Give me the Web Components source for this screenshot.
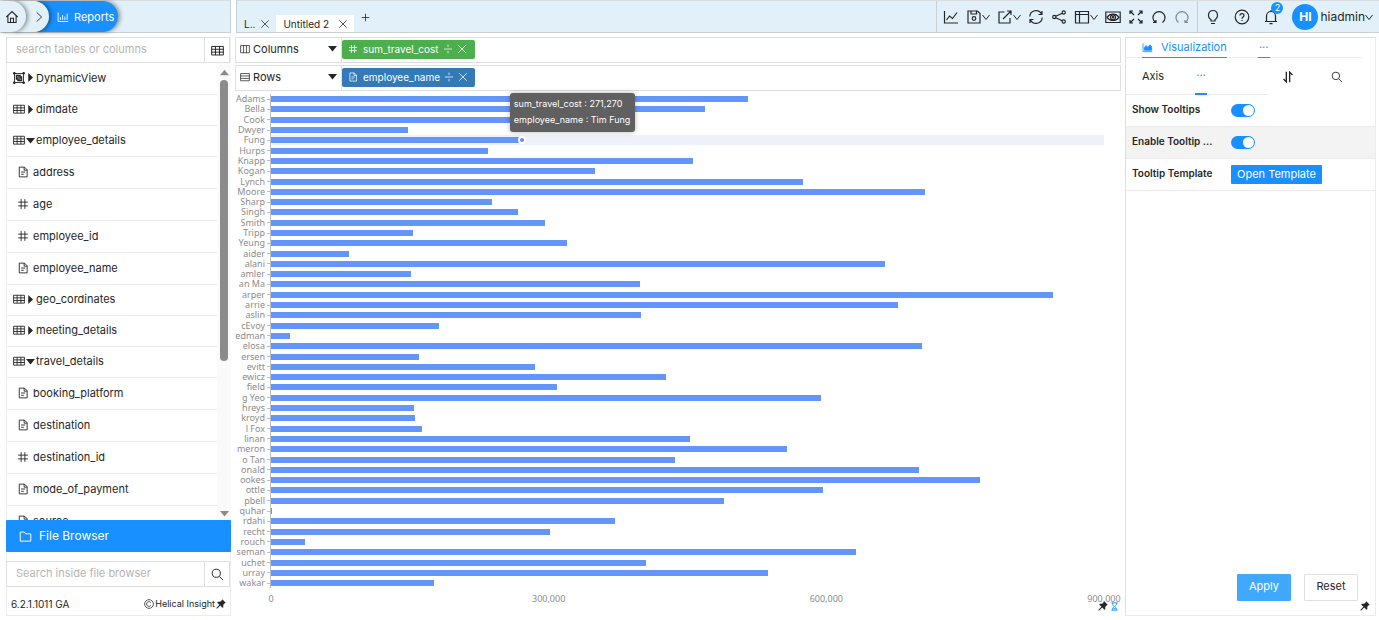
<!DOCTYPE html>
<html lang="en">
<head>
<meta charset="utf-8">
<meta name="viewport" content="width=device-width, initial-scale=1">
<title>Reports</title>
<style>
    html, body{
        height: 100%;
        margin: 0;
    }
    body{
        --blue: #1890ff;
        --bar: #e1f0f9;
        --line: #dfdfdf;
        --soft: #ececec;
        font-family: Inter, "Liberation Sans", sans-serif;
        font-size: 11px;
        line-height: 16px;
        color: #262626;
        background: #fff;
        overflow: hidden;
    }
</style>
</head>
<body>
<hi-app></hi-app>
<script>
const ICONS = {
    home: '<path d="M1.500 8 8 1.800 14.500 8M3.300 6.800v7.400h9.400V6.800M6.300 14V9.500h3.400V14"/>',
    next: '<path d="m5 2 6.500 6L5 14"/>',
    barline: '<path d="M1.500 2v12h13.500M4.500 12V8M7.500 12V5.500M10.500 12V7.500M13.500 12V3.500"/>',
    area: '<path d="M1.500 2v12h13.500"/><path fill="currentColor" d="M3.500 12V8l2.500-3 2.500 3 3-4 2.500 3v5z"/>',
    close: '<path d="m2 2 12 12M14 2 2 14"/>',
    plus: '<path d="M8 2.500v11M2.500 8h11"/>',
    line: '<path d="M1.500 2v12h13.500M3.500 11l3-4 3 2.500 4.500-6"/>',
    save: '<path d="M2 2h9.500L14 4.500V14H2zM5 2v3h5.500V2"/><circle cx="8" cy="9.500" r="1.800"/>',
    share: '<path d="M7.500 3H2v11h11V9M6 10l7.500-7.500M10 2h4v4"/>',
    sync: '<path d="M1.800 7.500a6.200 6.200 0 0 1 11.700-2.500M14.200 8.500a6.200 6.200 0 0 1-11.700 2.500M14 2v3.500h-3.500M2 14v-3.500h3.500"/>',
    nodes: '<path d="M11.300 4.200 4.700 7.300M4.700 8.700l6.600 3.100"/><circle cx="3.300" cy="8" r="1.600"/><circle cx="12.700" cy="3.500" r="1.600"/><circle cx="12.700" cy="12.500" r="1.600"/>',
    layout: '<path d="M1.500 2.500h13v11.500h-13zM5.500 2.500V14M1.500 5.500h13"/>',
    eye: '<path d="M.8 3h14.400v10.500H.8z"/><path d="M2 8.300C5 4 11 4 14 8.300 11 12.500 5 12.500 2 8.300z"/><circle cx="8" cy="8.300" r="2.500"/><circle cx="8" cy="8.300" r=".7"/>',
    expand: '<path d="m6 6-4-4M10 6l4-4M6 10l-4 4M10 10l4 4M2 5V2h3M11 2h3v3M2 11v3h3M14 11v3h-3"/>',
    undo: '<path d="M4.500 13.500a6 6 0 1 1 7 0M2 13.500h3V11"/>',
    redo: '<path d="M4.500 13.500a6 6 0 1 1 7 0M14 13.500h-3V11"/>',
    bulb: '<path d="M6 12v-1.500C2 8 3 1.500 8 1.500S14 8 10 10.500V12zM6 14.500h4"/>',
    help: '<circle cx="8" cy="8" r="6.800"/><path d="M6 6.500c0-2.700 4-2.500 4 0C10 8 8 8 8 9.700M8 11v1"/>',
    bell: '<path d="M2 12.500h12M3.500 12.500V7a4.500 4.500 0 0 1 9 0v5.500M8 2.500V1M6.500 14.700h3"/>',
    down: '<path stroke-width="2" d="m1 4 7 9 7-9"/>',
    table: '<path d="M.8 3h14.400v10.500H.8zM.8 6.500h14.400M.8 10h14.400M5.500 3v10.500M10.500 3v10.500"/>',
    view: '<path d="M2 2h12v12H2z"/><path stroke-width="1.600" d="M4.500 4.500h5v5h-5zM6.500 6.500h5v5h-5z"/><path fill="currentColor" d="M.8.8h2v2h-2zM13.200.8h2v2h-2zM.8 13.200h2v2h-2zM13.200 13.200h2v2h-2z"/>',
    file: '<path d="M3 1.500h7l3.500 3.500v9.500H3zM9.500 1.500v4h4M5.500 8h5.500M5.500 11h3.500"/>',
    hash: '<path d="M5.500 1.500v13M10.500 1.500v13M1.500 5.500h13M1.500 10.500h13"/>',
    right: '<path fill="currentColor" stroke="none" d="M4 0 12.500 8 4 16z"/>',
    caret: '<path fill="currentColor" stroke="none" d="M0 3.500h16l-8 10z"/>',
    up: '<path fill="currentColor" stroke="none" d="M0 13h16L8 3z"/>',
    folder: '<path d="M1.500 2.500H6.500l1.700 2.200h6.300v9h-13z"/>',
    search: '<circle cx="6.500" cy="6.500" r="5"/><path d="m10.300 10.300 4.500 4.500"/>',
    copyright: '<circle cx="8" cy="8" r="7"/><path d="M11 5.800a3.800 3.800 0 1 0 0 4.400"/>',
    pin: '<path fill="currentColor" stroke="none" d="M10 .5 15.500 6l-2 1-2 2.500.3 3.500-1.500 1-3.500-3.500L1.500 15.500l-1-1L5.500 9.300 2 5.800l1-1.500 3.500.2L9 2.500z"/>',
    columns: '<path d="M1 2.500h14v11.500H1zM5.700 2.500V14M10.300 2.500V14"/>',
    rows: '<path d="M1 2.500h14v11.500H1zM1 6.300h14M1 10.200h14"/>',
    divide: '<path d="M1.500 8h13M8 1v4M8 11v4"/>',
    sort: '<path stroke-width="1.800" d="M5.800 1v13.500L2 10.800M10.200 15V1.500l3.800 3.700"/>',
    hourglass: '<path stroke-width="1.600" d="M2.500 1.500h11M2.500 14.500h11M4 1.500c0 4 3 5 3 6.500s-3 2.500-3 6.500M12 1.500c0 4-3 5-3 6.500s3 2.500 3 6.500M5.500 12h5"/>'
}

const BUTTON = `
    button{
        font: inherit;
        color: inherit;
        background: none;
        border: 0;
        padding: 0;
        margin: 0;
        cursor: pointer;
    }
`

class Base extends HTMLElement{
    render(css, html){
        if(!this.shadowRoot) this.attachShadow({mode: 'open'})
        this.shadowRoot.innerHTML = `<style>*{box-sizing: border-box} ${BUTTON} ${css}</style>${html}`
    }
}

class Icon extends Base{
    connectedCallback(){
        const size = this.getAttribute('size') || 16
        this.render(`
            :host{ display: inline-flex; flex: none; }
            svg{ display: block; }
        `, `<svg width="${size}" height="${size}" viewBox="0 0 16 16" fill="none" stroke="currentColor" stroke-width="1.200" aria-hidden="true">${ICONS[this.getAttribute('name')]}</svg>`)
    }
}

class Breadcrumb extends Base{
    connectedCallback(){
        this.render(`
            :host{ display: flex; align-items: center; height: 31px; }
            button{
                display: flex;
                align-items: center;
                justify-content: flex-end;
                height: 31px;
                border-radius: 0 16px 16px 0;
                background: var(--bar);
                box-shadow: 2px 0 4px rgba(0,0,0,.4);
                position: relative;
            }
            .home{ width: 26px; padding-right: 7px; z-index: 3; }
            .next{ width: 36px; margin-left: -13px; padding-right: 4px; z-index: 2; }
            .page{
                margin-left: -12px;
                padding: 0 4px 0 20px;
                gap: 5px;
                color: #fff;
                background: var(--blue);
                z-index: 1;
            }
        `, `
            <button class="home" aria-label="Home"><hi-icon name="home" size="14"></hi-icon></button>
            <button class="next" aria-label="Next"><hi-icon name="next" size="12"></hi-icon></button>
            <button class="page"><hi-icon name="barline" size="12"></hi-icon>Reports</button>
        `)
    }
}

class Topbar extends Base{
    connectedCallback(){
        this.render(`
            :host{ display: flex; gap: 5px; height: 33px; flex: none; }
            .left, .right{
                background: var(--bar);
                border-top: 1px solid #d9dcde;
                border-bottom: 1px solid #c9cfd2;
            }
            .left{ width: 231px; border-right: 1px solid #c9cfd2; }
            .right{ flex: 1; display: flex; border-left: 1px solid #c9cfd2; }
            .tabs{ flex: 1; display: flex; align-items: flex-end; }
            .tab{ display: flex; align-items: center; height: 17px; font-size: 10px; }
            .tab > *{ display: flex; align-items: center; }
            .small{ padding: 0 6px 0 7px; gap: 5px; }
            .active{ background: #fff; padding: 0 6px 0 7px; gap: 9px; }
            .add{ margin: 0 0 5px 6px; }
            .tools, .user{
                display: flex;
                align-items: center;
                border-left: 1px solid #c9cfd2;
            }
            .tools{ gap: 7px; padding: 0 7px 0 6px; }
            .user{ gap: 13px; padding: 0 6px 0 7px; }
            .tools button, .user button{ display: flex; align-items: center; }
            .dim{ opacity: .5; }
            .bell{ position: relative; }
            .badge{
                position: absolute;
                left: 8px;
                top: -7px;
                width: 12px;
                height: 12px;
                border-radius: 50%;
                background: var(--blue);
                color: #fff;
                font-size: 9px;
                line-height: 12px;
                text-align: center;
            }
            .avatar{
                width: 26px;
                height: 26px;
                margin-right: 2px;
                border-radius: 50%;
                background: var(--blue);
                color: #fff;
                font-weight: 700;
                line-height: 26px;
            }
            .name{ font-size: 12px; }
        `, `
            <div class="left"><hi-breadcrumb></hi-breadcrumb></div>
            <div class="right">
                <div class="tabs">
                    <div class="tab small"><button>L..</button><button aria-label="Close tab"><hi-icon name="close" size="10"></hi-icon></button></div>
                    <div class="tab active"><button>Untitled 2</button><button aria-label="Close tab"><hi-icon name="close" size="10"></hi-icon></button></div>
                    <button class="add" aria-label="Add tab"><hi-icon name="plus" size="11"></hi-icon></button>
                </div>
                <div class="tools">
                    <button aria-label="Chart"><hi-icon name="line"></hi-icon></button>
                    <button aria-label="Save"><hi-icon name="save"></hi-icon><hi-icon name="down" size="8"></hi-icon></button>
                    <button aria-label="Export"><hi-icon name="share"></hi-icon><hi-icon name="down" size="8"></hi-icon></button>
                    <button aria-label="Refresh"><hi-icon name="sync"></hi-icon></button>
                    <button aria-label="Share"><hi-icon name="nodes"></hi-icon></button>
                    <button aria-label="Layout"><hi-icon name="layout"></hi-icon><hi-icon name="down" size="8"></hi-icon></button>
                    <button aria-label="Preview"><hi-icon name="eye"></hi-icon></button>
                    <button aria-label="Full screen"><hi-icon name="expand"></hi-icon></button>
                    <button aria-label="Undo"><hi-icon name="undo"></hi-icon></button>
                    <button aria-label="Redo" class="dim"><hi-icon name="redo"></hi-icon></button>
                </div>
                <div class="user">
                    <button aria-label="Tips"><hi-icon name="bulb"></hi-icon></button>
                    <button aria-label="Help"><hi-icon name="help"></hi-icon></button>
                    <button aria-label="Notifications" class="bell"><hi-icon name="bell"></hi-icon><span class="badge">2</span></button>
                    <button class="name"><span class="avatar">HI</span>hiadmin<hi-icon name="down" size="8"></hi-icon></button>
                </div>
            </div>
        `)
    }
}

class SearchBox extends Base{
    connectedCallback(){
        const text = this.getAttribute('placeholder')
        this.render(`
            :host{ display: flex; height: 26px; flex: none; }
            input{
                flex: 1;
                min-width: 0;
                padding: 0 9px 3px;
                font: inherit;
                border: 1px solid var(--line);
                border-right: 0;
                outline: 0;
            }
            input::placeholder{ color: #b5b5b5; opacity: 1; }
            button{
                display: flex;
                align-items: center;
                justify-content: center;
                width: 26px;
                border: 1px solid var(--line);
            }
        `, `
            <input type="text" placeholder="${text}" aria-label="${text}">
            <button aria-label="${this.getAttribute('action')}"><hi-icon name="${this.getAttribute('icon')}" size="13"></hi-icon></button>
        `)
    }
}

// One line of the tree: a table with its arrow, or a column of a table
class Field extends Base{
    connectedCallback(){
        const kind = this.getAttribute('kind')
        const isTable = kind === 'table' || kind === 'view'
        const arrow = this.hasAttribute('open') ? 'caret' : 'right'
        this.render(`
            :host{ display: block; height: ${isTable ? 31 : 32}px; flex: none; border-bottom: 1px solid var(--soft); }
            :host([kind=view]){ height: 32px; }
            button{
                display: flex;
                align-items: center;
                width: 100%;
                height: 100%;
                padding: 0 0 2px ${isTable ? 7 : 11}px;
                gap: ${isTable ? 1 : 4}px;
            }
        `, `<button>
            <hi-icon name="${kind}" size="12"></hi-icon>
            ${isTable ? `<hi-icon name="${arrow}" size="9"></hi-icon>` : ''}
            <slot></slot>
        </button>`)
    }
}

class Sidebar extends Base{
    connectedCallback(){
        this.render(`
            :host{
                display: flex;
                flex-direction: column;
                width: 225px;
                flex: none;
                box-shadow: inset 0 0 0 1px var(--soft);
            }
            .tree{ display: flex; flex: 1; min-height: 0; }
            .fields{ flex: 1; display: flex; flex-direction: column; overflow: hidden; }
            .scroll{
                display: flex;
                flex-direction: column;
                align-items: center;
                gap: 3px;
                width: 14px;
                padding: 5px 0 2px;
                background: #fafafa;
                color: #8b8b8b;
            }
            .track{ flex: 1; width: 8px; }
            .thumb{ height: 66%; border-radius: 4px; background: #8b8b8b; }
            hi-search{ margin-right: 1px; }
            .browser{
                display: flex;
                align-items: center;
                gap: 7px;
                height: 32px;
                padding-left: 13px;
                margin-bottom: 9px;
                border-radius: 1px;
                background: var(--blue);
                color: #fff;
                font-size: 12px;
            }
            footer{
                display: flex;
                align-items: center;
                gap: 1px;
                height: 29px;
                padding: 4px 5px 0;
                font-size: 9px;
            }
            footer span{ flex: 1; font-size: 10px; }
        `, `
            <hi-search placeholder="search tables or columns" icon="table" action="Show tables"></hi-search>
            <div class="tree">
                <div class="fields">
                    <hi-field kind="view">DynamicView</hi-field>
                    <hi-field kind="table">dimdate</hi-field>
                    <hi-field kind="table" open>employee_details</hi-field>
                    <hi-field kind="file">address</hi-field>
                    <hi-field kind="hash">age</hi-field>
                    <hi-field kind="hash">employee_id</hi-field>
                    <hi-field kind="file">employee_name</hi-field>
                    <hi-field kind="table">geo_cordinates</hi-field>
                    <hi-field kind="table">meeting_details</hi-field>
                    <hi-field kind="table" open>travel_details</hi-field>
                    <hi-field kind="file">booking_platform</hi-field>
                    <hi-field kind="file">destination</hi-field>
                    <hi-field kind="hash">destination_id</hi-field>
                    <hi-field kind="file">mode_of_payment</hi-field>
                    <hi-field kind="file">source</hi-field>
                </div>
                <div class="scroll">
                    <hi-icon name="up" size="9"></hi-icon>
                    <div class="track"><div class="thumb"></div></div>
                    <hi-icon name="caret" size="9"></hi-icon>
                </div>
            </div>
            <button class="browser"><hi-icon name="folder" size="13"></hi-icon>File Browser</button>
            <hi-search placeholder="Search inside file browser" icon="search" action="Search"></hi-search>
            <footer>
                <span>6.2.1.1011 GA</span>
                <hi-icon name="copyright" size="10"></hi-icon>Helical Insight
                <hi-icon name="pin" size="10"></hi-icon>
            </footer>
        `)
    }
}

class Pill extends Base{
    connectedCallback(){
        this.render(`
            :host{
                display: flex;
                align-items: center;
                width: 133px;
                height: 19px;
                padding: 0 9px 0 6px;
                border-radius: 2px;
                background: #337ab7;
                color: #fff;
                font-size: 10px;
            }
            :host([measure]){ background: #4cae4c; }
            span{ flex: 1; padding-left: 5px; }
            button{ display: flex; margin-left: 4px; }
        `, `
            <hi-icon name="${this.hasAttribute('measure') ? 'hash' : 'file'}" size="10"></hi-icon>
            <span><slot></slot></span>
            <button aria-label="Options"><hi-icon name="divide" size="10"></hi-icon></button>
            <button aria-label="Remove"><hi-icon name="close" size="10"></hi-icon></button>
        `)
    }
}

class Shelf extends Base{
    connectedCallback(){
        this.render(`
            :host{ display: flex; height: 26px; border: 1px solid var(--line); }
            .label{
                display: flex;
                align-items: center;
                gap: 3px;
                width: 106px;
                padding: 0 4px 3px;
                border-right: 1px solid var(--line);
            }
            .label span{ flex: 1; text-align: left; }
            .drop{ display: flex; align-items: center; padding-bottom: 2px; }
        `, `
            <button class="label">
                <hi-icon name="${this.getAttribute('icon')}" size="10"></hi-icon>
                <span>${this.getAttribute('label')}</span>
                <hi-icon name="caret" size="9"></hi-icon>
            </button>
            <div class="drop"><slot></slot></div>
        `)
    }
}

const COSTS = [
    ['Adams', 515], ['Bella', 469], ['Cook', 330], ['Dwyer', 148], ['Fung', 271],
    ['Hurps', 234], ['Knapp', 456], ['Kogan', 350], ['Lynch', 575], ['Moore', 707],
    ['Sharp', 239], ['Singh', 267], ['Smith', 296], ['Tripp', 153], ['Yeung', 320],
    ['aider', 84], ['alani', 663], ['amler', 151], ['an Ma', 399], ['arper', 845],
    ['arrie', 677], ['aslin', 400], ['cEvoy', 181], ['edman', 21], ['elosa', 703],
    ['ersen', 160], ['evitt', 285], ['ewicz', 427], ['field', 309], ['g Yeo', 594],
    ['hreys', 155], ['kroyd', 156], ['l Fox', 163], ['linan', 453], ['meron', 558],
    ['o Tan', 436], ['onald', 700], ['ookes', 766], ['ottle', 596], ['pbell', 489],
    ['quhar', 1], ['rdahi', 372], ['recht', 301], ['rouch', 37], ['seman', 632],
    ['uchet', 405], ['urray', 537], ['wakar', 176]
]
const MAX = 900

class BarChart extends Base{
    connectedCallback(){
        const rows = COSTS.map(([name, cost]) => {
            const active = name === 'Fung'
            return `
                <div class="row${active ? ' active' : ''}">
                    <span class="name">${name}</span>
                    <i class="tick"></i>
                    <div class="lane">
                        <div class="bar" style="width: ${cost / MAX * 100}%">
                            ${active ? '<i class="dot"></i><div class="tip"><div>sum_travel_cost : 271,270</div><div>employee_name : Tim Fung</div></div>' : ''}
                        </div>
                    </div>
                </div>`
        }).join('')
        this.render(`
            :host{
                display: flex;
                flex-direction: column;
                flex: 1;
                min-height: 0;
                font-family: "Noto Sans", "Open Sans", sans-serif;
                font-size: 9px;
                color: #8c8c8c;
            }
            .plot{ flex: 1; display: flex; flex-direction: column; min-height: 0; padding-right: 17px; }
            .row{ flex: 1; display: flex; align-items: center; min-height: 0; }
            .name{ width: 30px; line-height: 10px; text-align: right; white-space: nowrap; }
            .tick{ width: 3px; height: 1px; margin: 0 0 0 2px; background: #bfbfbf; }
            .lane{
                flex: 1;
                display: flex;
                align-items: center;
                align-self: stretch;
                border-left: 1px solid #bfbfbf;
            }
            .bar{ height: 6px; background: #6395fa; position: relative; }
            .active .lane{ background: #eef1fa; }
            .dot{
                position: absolute;
                right: -4px;
                top: -1px;
                width: 8px;
                height: 8px;
                border: 2px solid #fff;
                border-radius: 50%;
                background: #5b8ff9;
            }
            .tip{
                position: absolute;
                left: 100%;
                bottom: 11px;
                margin-left: -12px;
                padding: 3px 5px 4px 4px;
                z-index: 1;
                border-radius: 3px;
                background: #606060;
                box-shadow: 0 0 5px rgba(0,0,0,.3);
                color: #fff;
                font-family: Inter, sans-serif;
                line-height: 16px;
                white-space: nowrap;
            }
            .axis{ display: flex; justify-content: space-between; padding: 3px 17px 0 36px; }
            .axis span{ display: flex; justify-content: center; width: 0; white-space: nowrap; }
        `, `
            <div class="plot">${rows}</div>
            <div class="axis"><span>0</span><span>300,000</span><span>600,000</span><span>900,000</span></div>
        `)
    }
}

class Workspace extends Base{
    connectedCallback(){
        this.render(`
            :host{ display: flex; flex-direction: column; flex: 1; min-width: 0; }
            .shelves{ display: flex; flex-direction: column; gap: 2px; margin-bottom: 3px; }
            footer{
                display: flex;
                justify-content: flex-end;
                align-items: center;
                gap: 2px;
                height: 10px;
                margin: -6px 2px 5px 0;
                z-index: 1;
            }
            .busy{ color: var(--blue); }
            footer button{ display: flex; }
        `, `
            <div class="shelves">
                <hi-shelf label="Columns" icon="columns"><hi-pill measure>sum_travel_cost</hi-pill></hi-shelf>
                <hi-shelf label="Rows" icon="rows"><hi-pill>employee_name</hi-pill></hi-shelf>
            </div>
            <hi-bar-chart></hi-bar-chart>
            <footer>
                <button aria-label="Pin"><hi-icon name="pin" size="10"></hi-icon></button>
                <button aria-label="History" class="busy"><hi-icon name="hourglass" size="9"></hi-icon></button>
            </footer>
        `)
    }
}

class Setting extends Base{
    connectedCallback(){
        const control = this.hasAttribute('action')
            ? `<button id="control">${this.getAttribute('action')}</button>`
            : '<input id="control" type="checkbox" role="switch" checked>'
        this.render(`
            :host{
                display: flex;
                align-items: center;
                height: 32px;
                padding: 0 6px;
                border-bottom: 1px solid var(--soft);
            }
            :host([shaded]){ background: #f3f3f3; }
            label{ width: 99px; padding-bottom: 4px; font-size: 10px; font-weight: 600; white-space: nowrap; }
            input{
                appearance: none;
                display: flex;
                width: 24px;
                height: 13px;
                margin: 0;
                padding: 1px;
                border-radius: 7px;
                background: #bfbfbf;
            }
            input::before{
                content: "";
                width: 11px;
                height: 11px;
                border-radius: 50%;
                background: #fff;
            }
            input:checked{ background: var(--blue); justify-content: flex-end; }
            button{
                height: 19px;
                padding: 0 6px 2px;
                border-radius: 1px;
                background: var(--blue);
                color: #fff;
            }
        `, `<label for="control">${this.getAttribute('label')}</label>${control}`)
    }
}

class Properties extends Base{
    connectedCallback(){
        this.render(`
            :host{
                display: flex;
                flex-direction: column;
                width: 251px;
                flex: none;
                border: 1px solid var(--line);
                border-right-color: var(--soft);
                border-bottom-color: var(--soft);
            }
            .tabs{ display: flex; height: 20px; margin-right: 13px; padding-left: 16px; border-bottom: 1px solid var(--soft); }
            .tabs button{
                display: flex;
                align-items: center;
                gap: 8px;
                height: 20px;
                padding-bottom: 1px;
                color: var(--blue);
                border-bottom: 1px solid var(--blue);
            }
            .tabs .more{ margin-left: 31px; }
            .sub{ display: flex; align-items: stretch; height: 37px; }
            .sub nav{ display: flex; width: 142px; padding-left: 16px; border-bottom: 1px solid var(--soft); }
            .sub nav button{ height: 37px; padding-bottom: 1px; }
            .sub .more{ margin-left: 31px; color: var(--blue); border-bottom: 2px solid var(--blue); }
            .more{ width: 12px; justify-content: center; }
            .tool{ display: flex; align-items: center; }
            .order{ margin-left: 14px; }
            .find{ margin-left: 37px; }
            .space{ flex: 1; }
            .actions{ display: flex; justify-content: flex-end; gap: 13px; padding-right: 17px; }
            .actions button{
                width: 54px;
                height: 27px;
                padding-bottom: 3px;
                border: 1px solid var(--line);
                border-radius: 1px;
            }
            .actions .apply{ background: #40a9ff; border-color: #40a9ff; color: #fff; }
            .pin{ display: flex; align-self: flex-end; margin: 0 5px 4px; }
        `, `
            <div class="tabs">
                <button><hi-icon name="area" size="11"></hi-icon>Visualization</button>
                <button class="more" aria-label="More tabs">···</button>
            </div>
            <div class="sub">
                <nav>
                    <button>Axis</button>
                    <button class="more" aria-label="More">···</button>
                </nav>
                <button class="tool order" aria-label="Sort"><hi-icon name="sort" size="12"></hi-icon></button>
                <button class="tool find" aria-label="Search"><hi-icon name="search" size="12"></hi-icon></button>
            </div>
            <hi-setting label="Show Tooltips"></hi-setting>
            <hi-setting label="Enable Tooltip ..." shaded></hi-setting>
            <hi-setting label="Tooltip Template" action="Open Template"></hi-setting>
            <div class="space"></div>
            <div class="actions">
                <button class="apply">Apply</button>
                <button>Reset</button>
            </div>
            <button class="pin" aria-label="Pin"><hi-icon name="pin" size="10"></hi-icon></button>
        `)
    }
}

class App extends Base{
    connectedCallback(){
        this.render(`
            :host{ display: flex; flex-direction: column; height: 100vh; }
            main{
                display: flex;
                flex: 1;
                gap: 4px;
                min-height: 0;
                padding: 4px 3px 4px 6px;
            }
        `, `
            <hi-topbar></hi-topbar>
            <main>
                <hi-sidebar></hi-sidebar>
                <hi-workspace></hi-workspace>
                <hi-properties></hi-properties>
            </main>
        `)
    }
}

customElements.define('hi-icon', Icon)
customElements.define('hi-breadcrumb', Breadcrumb)
customElements.define('hi-topbar', Topbar)
customElements.define('hi-search', SearchBox)
customElements.define('hi-field', Field)
customElements.define('hi-sidebar', Sidebar)
customElements.define('hi-pill', Pill)
customElements.define('hi-shelf', Shelf)
customElements.define('hi-bar-chart', BarChart)
customElements.define('hi-workspace', Workspace)
customElements.define('hi-setting', Setting)
customElements.define('hi-properties', Properties)
customElements.define('hi-app', App)
</script>
</body>
</html>
